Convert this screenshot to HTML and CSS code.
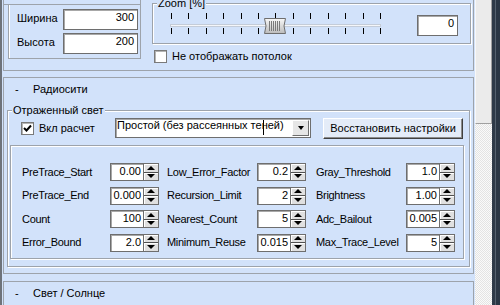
FILE: index.html
```html
<!DOCTYPE html>
<html lang="ru">
<head>
<meta charset="utf-8">
<title>Radiosity settings</title>
<link rel="stylesheet" href="styles.css">
</head>
<body>
<div class="screen">
  <div class="main">
    <div class="panel panel-a">
      <div class="size-wrap">
        <div class="size-top"></div>
        <div class="size-box">
          <div class="size-row"><span class="size-label">Ширина</span><span class="edit size-edit">300</span></div>
          <div class="size-row"><span class="size-label">Высота</span><span class="edit size-edit">200</span></div>
        </div>
      </div>
      <div class="view-col">
        <div class="group etched zoom-group">
          <span class="legend">Zoom [%]</span>
          <svg class="slider" width="230" height="26" viewBox="0 0 230 26">
            <defs>
              <linearGradient id="tg" x1="0" y1="0" x2="0" y2="1">
                <stop offset="0" stop-color="#f8f8f8"/>
                <stop offset="1" stop-color="#bcbcbc"/>
              </linearGradient>
            </defs>
            <path stroke="#000" stroke-width="1" fill="none" d="M2.5 3V9M19.5 3V9M37.5 3V9M54.5 3V9M72.5 3V9M89.5 3V9M106.5 3V9M124.5 3V9M141.5 3V9M159.5 3V9M176.5 3V9M194.5 3V9M211.5 3V9M2.5 18V24M19.5 18V24M37.5 18V24M54.5 18V24M72.5 18V24M89.5 18V24M106.5 18V24M124.5 18V24M141.5 18V24M159.5 18V24M176.5 18V24M194.5 18V24M211.5 18V24"/>
            <rect x="1.5" y="14.5" width="210" height="2" fill="#f4f6fa" stroke="#c4ccd8"/>
            <path d="M95.5 8.5H116.5L115 16L116.5 23.5H95.5L97 16Z" fill="url(#tg)" stroke="#6e6e6e"/>
            <path d="M100.5 11V21M102.5 11V21M104.5 11V21M106.5 11V21M108.5 11V21M110.5 11V21" stroke="#7a7a7a" stroke-width="1"/>
          </svg>
          <span class="edit zoom-val">0</span>
        </div>
        <div class="check-row ceiling">
          <span class="checkbox"></span>
          <span>Не отображать потолок</span>
        </div>
      </div>
    </div>

    <div class="panel panel-b">
      <div class="panel-head"><span class="dash">-</span><span>Радиосити</span></div>
      <div class="group etched refl-group">
        <span class="legend">Отраженный свет</span>
        <div class="refl-row">
          <div class="check-row vkl">
            <span class="checkbox">
              <svg width="11" height="11" viewBox="0 0 11 11"><path d="M2 5L4.5 7.5L9 2.5" fill="none" stroke="#000" stroke-width="2"/></svg>
            </span>
            <span>Вкл расчет</span>
          </div>
          <div class="combo">
            <span class="combo-text">Простой (без рассеянных теней)</span>
            <span class="combo-btn"><i class="tri-down"></i></span>
            <span class="ibeam"></span>
          </div>
          <div class="btn">Восстановить настройки</div>
        </div>
        <div class="params etched">
          <span class="plabel">PreTrace_Start</span>
          <div class="spin"><span class="val">0.00</span><span class="ud"><i class="up"></i><i class="dn"></i></span></div>
          <span class="plabel">Low_Error_Factor</span>
          <div class="spin"><span class="val">0.2</span><span class="ud"><i class="up"></i><i class="dn"></i></span></div>
          <span class="plabel">Gray_Threshold</span>
          <div class="spin"><span class="val">1.0</span><span class="ud"><i class="up"></i><i class="dn"></i></span></div>

          <span class="plabel">PreTrace_End</span>
          <div class="spin"><span class="val">0.000</span><span class="ud"><i class="up"></i><i class="dn"></i></span></div>
          <span class="plabel">Recursion_Limit</span>
          <div class="spin"><span class="val">2</span><span class="ud"><i class="up"></i><i class="dn"></i></span></div>
          <span class="plabel">Brightness</span>
          <div class="spin"><span class="val">1.00</span><span class="ud"><i class="up"></i><i class="dn"></i></span></div>

          <span class="plabel">Count</span>
          <div class="spin"><span class="val">100</span><span class="ud"><i class="up"></i><i class="dn"></i></span></div>
          <span class="plabel">Nearest_Count</span>
          <div class="spin"><span class="val">5</span><span class="ud"><i class="up"></i><i class="dn"></i></span></div>
          <span class="plabel">Adc_Bailout</span>
          <div class="spin"><span class="val">0.005</span><span class="ud"><i class="up"></i><i class="dn"></i></span></div>

          <span class="plabel">Error_Bound</span>
          <div class="spin"><span class="val">2.0</span><span class="ud"><i class="up"></i><i class="dn"></i></span></div>
          <span class="plabel">Minimum_Reuse</span>
          <div class="spin"><span class="val">0.015</span><span class="ud"><i class="up"></i><i class="dn"></i></span></div>
          <span class="plabel">Max_Trace_Level</span>
          <div class="spin"><span class="val">5</span><span class="ud"><i class="up"></i><i class="dn"></i></span></div>
        </div>
      </div>
    </div>

    <div class="panel panel-c">
      <div class="panel-head"><span class="dash">-</span><span>Свет / Солнце</span></div>
    </div>
  </div>
  <div class="scrollbar">
    <div class="thumb"></div>
    <div class="track"></div>
  </div>
  <div class="frame"></div>
</div>
</body>
</html>
```

FILE: styles.css
```css
* { box-sizing: border-box; }
html, body { margin: 0; padding: 0; }
body {
  width: 500px;
  height: 305px;
  overflow: hidden;
  background: #d2e2fa;
  font: 11px/13px "Liberation Sans", Arial, sans-serif;
  color: #000;
}
.screen { display: flex; width: 500px; height: 305px; overflow: hidden; }

.main {
  width: 475px;
  height: 305px;
  flex: none;
  border-left: 2px solid #6e737a;
  padding-left: 1px;
  display: flex;
  flex-direction: column;
}

.panel { width: 471px; flex: none; border: 1px solid #9da3ab; }
.etched {
  border: 1px solid #9da3ab;
  box-shadow: inset 1px 1px 0 #fff, 1px 1px 0 #fff;
}

/* top panel */
.panel-a { height: 71px; border-top: none; display: flex; }
.size-wrap { width: 137px; height: 59px; border-right: 1px solid #9da3ab; flex: none; }
.size-top { height: 5px; border-bottom: 1px solid #9da3ab; }
.size-box {
  margin-left: 4px;
  height: 54px;
  border-left: 1px solid #9da3ab;
  border-bottom: 1px solid #9da3ab;
  box-shadow: inset 1px 0 0 #fff;
  padding: 4px 0 0 8px;
  display: flex;
  flex-direction: column;
  gap: 3px;
}
.size-row { display: flex; height: 21px; }
.size-label { width: 46px; margin-top: 3px; }

.edit {
  display: block;
  background: #fff;
  border: 1px solid #6e6e6e;
  box-shadow: inset 1px 1px 0 #a8a8a8;
  text-align: right;
  padding: 1px 3px 0 0;
}
.size-edit { width: 75px; height: 21px; }

.view-col { display: flex; flex-direction: column; }
.group { position: relative; }
.legend {
  position: absolute;
  top: -7px;
  left: 4px;
  padding: 0 1px;
  background: #d2e2fa;
  white-space: nowrap;
}
.zoom-group {
  margin: 3px 0 0 11px;
  width: 319px;
  height: 41px;
  display: flex;
  align-items: flex-start;
}
.slider { display: block; margin: 6px 0 0 16px; flex: none; }
.zoom-val { width: 41px; height: 21px; margin: 11px 0 0 18px; }

.check-row { display: flex; align-items: center; white-space: nowrap; }
.checkbox {
  width: 13px;
  height: 13px;
  flex: none;
  background: #fff;
  border: 1px solid #7a7a7a;
  box-shadow: inset 1px 1px 0 #b4b4b4;
  margin-right: 5px;
  display: flex;
}
.checkbox svg { display: block; }
.ceiling { margin: 6px 0 0 13px; height: 13px; }

/* radiosity panel */
.panel-b { margin-top: 6px; height: 197px; }
.panel-head { height: 32px; padding: 5px 0 0 11px; display: flex; }
.dash { width: 18px; }
.refl-group { margin-left: 3px; width: 463px; height: 157px; }
.refl-row {
  display: flex;
  align-items: center;
  height: 21px;
  margin-top: 7px;
  padding-left: 13px;
}
.vkl { width: 94px; flex: none; }
.combo {
  position: relative;
  align-self: flex-start;
  width: 196px;
  height: 20px;
  flex: none;
  display: flex;
  background: #fff;
  border: 1px solid #6e6e6e;
  box-shadow: inset 1px 1px 0 #a8a8a8;
  padding: 0 1px 0 1px;
}
.combo-text { flex: 1; white-space: nowrap; overflow: hidden; }
.combo-btn {
  width: 17px;
  height: 16px;
  margin-top: 1px;
  background: #e6e6e6;
  border: 1px solid;
  border-color: #fff #6e6e6e #6e6e6e #fff;
  display: flex;
  align-items: center;
  justify-content: center;
}
.tri-down {
  width: 0; height: 0;
  border-left: 3.5px solid transparent;
  border-right: 3.5px solid transparent;
  border-top: 4px solid #000;
}
.ibeam {
  position: absolute;
  left: 147px;
  top: 1px;
  width: 1px;
  height: 15px;
  background: #000;
}
.btn {
  margin-left: 12px;
  width: 140px;
  height: 21px;
  flex: none;
  background: #e4ecf8;
  border: 1px solid;
  border-color: #fff #404040 #404040 #fff;
  box-shadow: inset -1px -1px 0 #8c8c8c;
  text-align: center;
  padding-top: 3px;
  white-space: nowrap;
}

.params {
  margin: 6px 0 0 2px;
  width: 454px;
  height: 114px;
  padding: 17px 0 0 11px;
  display: grid;
  grid-template-columns: 88px 57px 90px 59px 90px 49px;
  grid-template-rows: repeat(4, 18px);
  row-gap: 5.5px;
  align-items: center;
}
.plabel { white-space: nowrap; letter-spacing: -0.3px; }
.spin {
  width: 49px;
  height: 18px;
  display: flex;
  background: #fff;
  border: 1px solid #6e6e6e;
  box-shadow: inset 1px 1px 0 #a8a8a8;
}
.spin .val { flex: 1; text-align: right; padding: 1px 2px 0 0; }
.ud {
  width: 15px;
  flex: none;
  display: flex;
  flex-direction: column;
  border-left: 1px solid #6e6e6e;
}
.ud i {
  flex: 1;
  background: #e0e0e0;
  box-shadow: inset 1px 1px 0 #fff;
  display: flex;
  align-items: center;
  justify-content: center;
}
.ud i.up { border-bottom: 1px solid #505050; }
.ud i::before { content: ""; width: 0; height: 0; border-left: 4px solid transparent; border-right: 4px solid transparent; }
.ud i.up::before { border-bottom: 4px solid #000; }
.ud i.dn::before { border-top: 4px solid #000; }

.panel-c { margin-top: 7px; height: 40px; }

/* scrollbar + frame */
.scrollbar { width: 17px; height: 305px; flex: none; display: flex; flex-direction: column; }
.thumb {
  height: 124px;
  background: #ebebeb;
  border-left: 1px solid #f8f8f8;
  border-right: 1px solid #a0a0a0;
  border-bottom: 1px solid #a0a0a0;
}
.track {
  flex: 1;
  background: repeating-conic-gradient(#e4e4e4 0 25%, #fafafa 0 50%) 0 0 / 2px 2px;
}
.frame {
  width: 8px;
  height: 305px;
  flex: none;
  background: linear-gradient(90deg, #2e3a48 0, #2e3a48 3px, #56626f 3px, #56626f 4px, #2a3644 4px);
}
```
